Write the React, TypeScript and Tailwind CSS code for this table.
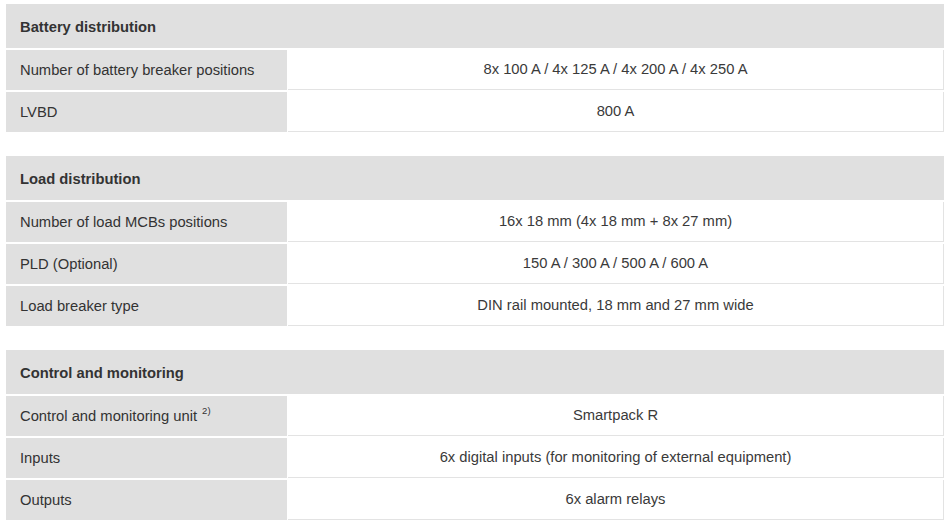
type Row = { label: React.ReactNode; value: string };
type Section = { title: string; rows: Row[] };

const sections: Section[] = [
  {
    title: "Battery distribution",
    rows: [
      { label: "Number of battery breaker positions", value: "8x 100 A / 4x 125 A / 4x 200 A / 4x 250 A" },
      { label: "LVBD", value: "800 A" },
    ],
  },
  {
    title: "Load distribution",
    rows: [
      { label: "Number of load MCBs positions", value: "16x 18 mm (4x 18 mm + 8x 27 mm)" },
      { label: "PLD (Optional)", value: "150 A / 300 A / 500 A / 600 A" },
      { label: "Load breaker type", value: "DIN rail mounted, 18 mm and 27 mm wide" },
    ],
  },
  {
    title: "Control and monitoring",
    rows: [
      {
        label: (
          <>
            Control and monitoring unit
            <sup className="ml-[5px] text-[9.5px]">2)</sup>
          </>
        ),
        value: "Smartpack R",
      },
      { label: "Inputs", value: "6x digital inputs (for monitoring of external equipment)" },
      { label: "Outputs", value: "6x alarm relays" },
    ],
  },
];

function SpecTable({ section }: { section: Section }) {
  return (
    <div className="flex flex-col gap-[2px] bg-white">
      <div className="flex h-[44px] items-center bg-[#e0e0e0] px-[14px] pt-[3px] font-bold text-[#333]">
        {section.title}
      </div>
      {section.rows.map((r, i) => (
        <div key={i} className="flex h-[40px]">
          <div className="flex w-[281px] shrink-0 items-center bg-[#e0e0e0] px-[14px] text-[#333]">
            {r.label}
          </div>
          <div className="ml-px flex flex-1 items-center justify-center border-r border-b border-[#e3e3e3] text-[#3a3a3a]">
            {r.value}
          </div>
        </div>
      ))}
    </div>
  );
}

export default function App() {
  return (
    <div
      className="min-h-[523px] w-[952px] bg-white pt-[4px] pr-[8px] pl-[6px] text-[14.75px]"
      style={{ fontFamily: '"Liberation Sans", Arial, sans-serif' }}
    >
      <div className="flex flex-col gap-[24px]">
        {sections.map((s) => (
          <SpecTable key={s.title} section={s} />
        ))}
      </div>
    </div>
  );
}
